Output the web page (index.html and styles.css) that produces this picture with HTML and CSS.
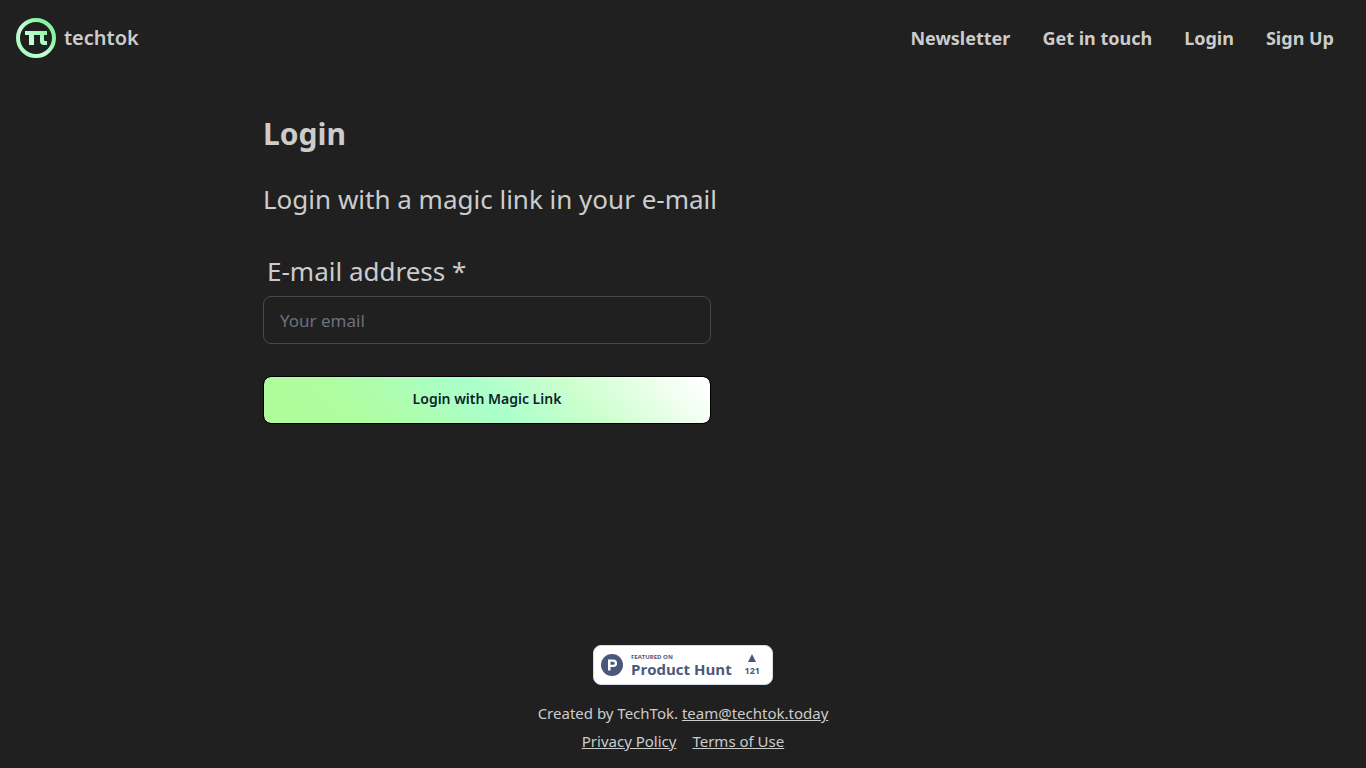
FILE: index.html
```
<!DOCTYPE html>
<html lang="en">
<head>
    <meta charset="UTF-8">
    <meta name="viewport" content="width=device-width, initial-scale=1.0">
    <title>Login - techtok</title>
    <link rel="stylesheet" href="styles.css">
</head>
<body>
    <header class="navbar">
        <a href="/" class="brand">
            <svg class="logo" viewBox="0 0 40 40" aria-hidden="true">
                <defs>
                    <linearGradient id="mint" gradientUnits="userSpaceOnUse" x1="4" y1="34" x2="36" y2="6">
                        <stop offset="0" stop-color="#a8fcbc"/>
                        <stop offset="0.4" stop-color="#c4ffd6"/>
                        <stop offset="0.8" stop-color="#8af5a2"/>
                        <stop offset="1" stop-color="#84f59c"/>
                    </linearGradient>
                </defs>
                <circle cx="20" cy="20" r="18" fill="none" stroke="url(#mint)" stroke-width="4"/>
                <path d="M9 13H31V17H28V22Q28 23 29 23H31V27H28Q24 27 24 23V17H18V27H13V17H9Z" fill="url(#mint)"/>
            </svg>
            <span>techtok</span>
        </a>
        <nav class="menu">
            <a href="/newsletter">Newsletter</a>
            <a href="/contact">Get in touch</a>
            <a href="/login">Login</a>
            <a href="/signup">Sign Up</a>
        </nav>
    </header>

    <main class="container">
        <h1>Login</h1>
        <p class="intro">Login with a magic link in your e-mail</p>
        <form class="login-form" action="/login" method="post">
            <label for="email">E-mail address *</label>
            <input type="email" id="email" name="email" placeholder="Your email" required>
            <button type="submit">Login with Magic Link</button>
        </form>
    </main>

    <footer class="footer">
        <a href="/producthunt" class="ph-badge">
            <svg class="ph-logo" viewBox="0 0 22 22" aria-hidden="true">
                <circle cx="11" cy="11" r="11" fill="#4b587c"/>
                <path fill="#fff" fill-rule="evenodd" d="M7 5.5H12.3A3.8 3.8 0 0 1 12.3 13.1H9.5V16.5H7ZM9.5 7.8V10.8H12.2A1.5 1.5 0 0 0 12.2 7.8Z"/>
            </svg>
            <span class="ph-text">
                <span class="ph-small">FEATURED ON</span>
                <span class="ph-name">Product Hunt</span>
            </span>
            <span class="ph-votes">
                <svg viewBox="0 0 8 8" aria-hidden="true"><path d="M4 0L8 8H0Z" fill="#4b587c"/></svg>
                <span>121</span>
            </span>
        </a>
        <p>Created by TechTok. <a href="mailto:team@techtok.today">team@techtok.today</a></p>
        <div class="footer-links">
            <a href="/privacy">Privacy Policy</a>
            <a href="/terms">Terms of Use</a>
        </div>
    </footer>
</body>
</html>
```
FILE: styles.css
```
* {
    box-sizing: border-box;
}
body {
    font-family: "Noto Sans", "Open Sans", sans-serif;
    display: flex;
    flex-direction: column;
    min-height: 100vh;
    margin: 0;
    background: #202020;
    color: #cccccc;
}
a {
    color: inherit;
}
.navbar {
    display: flex;
    justify-content: space-between;
    align-items: center;
    padding: 18px 32px 18px 16px;
}
.brand {
    display: flex;
    align-items: center;
    gap: 8px;
    font-size: 20px;
    line-height: 28px;
    font-weight: 600;
    text-decoration: none;
}
.logo {
    width: 40px;
    height: 40px;
}
.menu {
    display: flex;
    gap: 32px;
    font-size: 18px;
    line-height: 28px;
    font-weight: 700;
}
.menu a {
    text-decoration: none;
}
.container {
    flex: 1;
    width: 100%;
    max-width: 872px;
    margin: 0 auto;
    padding: 38px 16px;
}
h1 {
    margin: 0 0 27px;
    font-size: 30px;
    line-height: 40px;
    font-weight: 700;
}
.intro {
    margin: 0 0 36px;
    font-size: 26px;
    line-height: 36px;
}
.login-form {
    display: flex;
    flex-direction: column;
    width: 100%;
    max-width: 448px;
}
.login-form label {
    padding: 0 4px;
    margin-bottom: 7px;
    font-size: 26px;
    line-height: 36px;
}
.login-form input {
    height: 48px;
    padding: 0 16px;
    border: 1px solid #484848;
    border-radius: 8px;
    background: transparent;
    color: #cccccc;
    font-family: inherit;
    font-size: 17px;
}
.login-form input::placeholder {
    color: #6b7080;
    opacity: 1;
}
.login-form button {
    height: 48px;
    margin-top: 32px;
    padding-bottom: 4px;
    border: 1px solid #000000;
    border-radius: 8px;
    background: linear-gradient(45deg, #b0fc9c, #affd9f 20%, #aaffcb 50%, #ceffce 70%, #ffffff 97%) padding-box;
    color: #0d1f2b;
    font-family: inherit;
    font-size: 14px;
    font-weight: 600;
    cursor: pointer;
}
.footer {
    display: flex;
    flex-direction: column;
    align-items: center;
    padding-bottom: 17px;
    font-size: 15px;
    line-height: 20px;
}
.footer p {
    margin: 18px 0 8px;
}
.footer-links {
    display: flex;
    gap: 16px;
}
.ph-badge {
    display: flex;
    align-items: center;
    width: 180px;
    height: 40px;
    padding: 0 12px 0 7px;
    border: 1px solid #d8dce6;
    border-radius: 8px;
    background: #ffffff;
    color: #4b587c;
    font-family: "Open Sans", sans-serif;
    font-weight: 700;
    text-decoration: none;
}
.ph-logo {
    width: 22px;
    height: 22px;
    margin-right: 8px;
}
.ph-text {
    display: flex;
    flex-direction: column;
    white-space: nowrap;
}
.ph-small {
    font-size: 6px;
    line-height: 8px;
}
.ph-name {
    font-size: 15px;
    line-height: 16px;
}
.ph-votes {
    display: flex;
    flex-direction: column;
    align-items: center;
    gap: 4px;
    margin-left: auto;
    font-size: 9px;
    line-height: 10px;
}
.ph-votes svg {
    width: 8px;
    height: 8px;
}
```
